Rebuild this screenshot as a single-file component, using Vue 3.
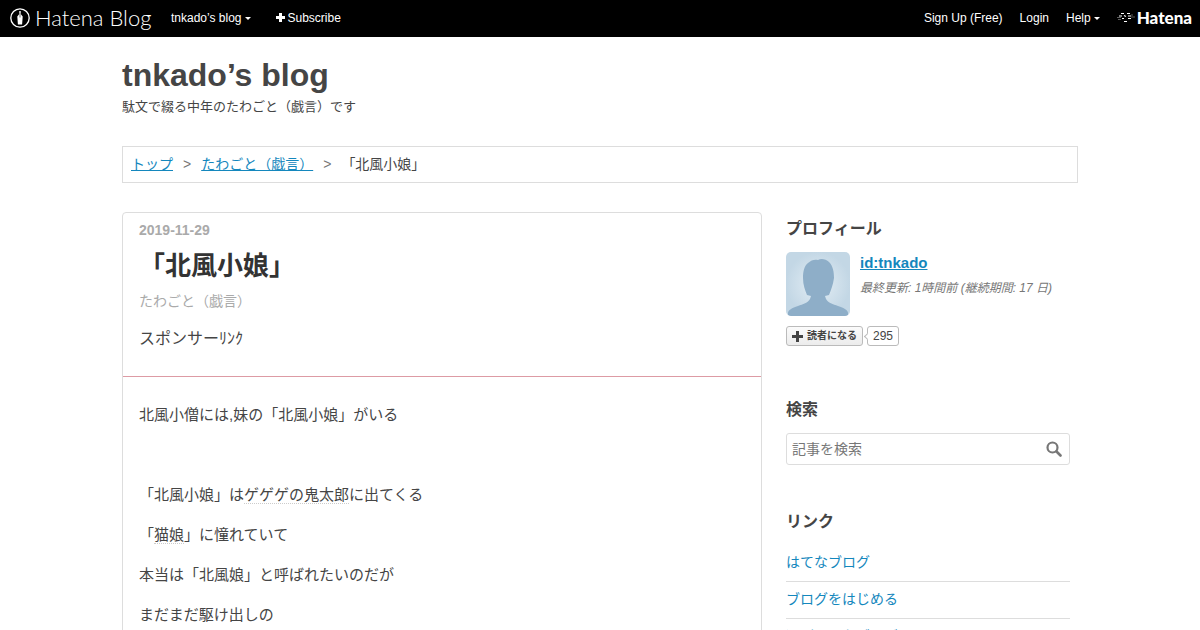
<script setup>
import { ref } from 'vue'

const query = ref('')
const links = ['はてなブログ', 'ブログをはじめる', '週刊はてなブログ']
</script>

<template>
  <header class="globalheader">
    <a href="#" class="brand" aria-label="Hatena Blog">
      <svg class="brand-mark" viewBox="0 0 20 20" aria-hidden="true">
        <circle cx="10" cy="10" r="9.2" fill="none" stroke="#fff" stroke-width="1.3" />
        <path d="M9.300 3h1.400v3l2 2.500-.6 8H7.900l-.6-8 2-2.500z" fill="#fff" />
        <path d="M10 5.500v4" stroke="#000" stroke-width=".6" />
      </svg>
      <span class="brand-name">Hatena Blog</span>
    </a>
    <a href="#" class="nav blog-menu">tnkado’s blog<i class="caret"></i></a>
    <a href="#" class="nav subscribe">
      <svg class="plus" viewBox="0 0 9 9" aria-hidden="true"><path d="M3 0h3v3h3v3H6v3H3V6H0V3h3z" fill="#fff" /></svg>Subscribe
    </a>
    <nav class="right">
      <a href="#" class="nav">Sign Up (Free)</a>
      <a href="#" class="nav">Login</a>
      <a href="#" class="nav">Help<i class="caret"></i></a>
      <a href="#" class="hatena" aria-label="Hatena">
        <svg class="hatena-mark" viewBox="0 0 18 12" aria-hidden="true">
          <g stroke="#fff" fill="none">
            <path d="M4 1.500h3M10 1.500h3M2 4h3M7 3.500l2 1M11 4h3M5 6.500h2M11 6.500h3M7 9.500h3" stroke-width="1.200" />
            <path d="M0 5.500h4M14 5h4M1 7.500h3M14 3h2" stroke-width=".6" opacity=".6" />
          </g>
        </svg>
        <span>Hatena</span>
      </a>
    </nav>
  </header>

  <div class="container">
    <div class="blog-title">
      <h1>tnkado’s blog</h1>
      <p>駄文で綴る中年のたわごと（戯言）です</p>
    </div>

    <nav class="breadcrumb">
      <a href="#">トップ</a><span class="gt">&gt;</span><a href="#">たわごと（戯言）</a><span class="gt">&gt;</span><span>「北風小娘」</span>
    </nav>

    <div class="columns">
      <main class="entry">
        <div class="entry-head">
          <time datetime="2019-11-29">2019-11-29</time>
          <h2>「北風小娘」</h2>
          <a href="#" class="category">たわごと（戯言）</a>
          <p class="sponsor">スポンサーﾘﾝｸ</p>
        </div>
        <div class="entry-body">
          <p>北風小僧には,妹の「北風小娘」がいる</p>
          <p>&nbsp;</p>
          <p>「北風小娘」は<a href="#" class="keyword">ゲゲゲの鬼太郎</a>に出てくる</p>
          <p>「<a href="#" class="keyword">猫娘</a>」に憧れていて</p>
          <p>本当は「北風娘」と呼ばれたいのだが</p>
          <p>まだまだ駆け出しの</p>
        </div>
      </main>

      <aside class="sidebar">
        <section class="profile">
          <h3>プロフィール</h3>
          <div class="profile-row">
            <svg class="avatar" viewBox="0 0 64 64" role="img" aria-label="tnkado">
              <defs>
                <radialGradient id="avatar-bg">
                  <stop offset="0" stop-color="#e4eef5" />
                  <stop offset="1" stop-color="#c3d7e5" />
                </radialGradient>
              </defs>
              <rect width="64" height="64" fill="url(#avatar-bg)" />
              <path d="M32 8c3-2 8-1 11 2 4 4 5 10 5 16-1 7-3 12-5 17l-4 1 1 3c2 4 7 5 12 7 6 2 10 4 10 7v3H2v-3c0-3 4-5 10-7 5-2 10-3 12-7l1-3-4-1c-2-5-4-10-4-17 0-6 1-12 5-15 3-3 7-4 10-3z" fill="#8eaec8" />
            </svg>
            <div class="profile-text">
              <a href="#" class="user-id">id:tnkado</a>
              <p>最終更新: 1時間前 (継続期間: 17 日)</p>
            </div>
          </div>
          <div class="reader">
            <button type="button">
              <svg viewBox="0 0 11 11" aria-hidden="true"><path d="M4 0h3v4h4v3H7v4H4V7H0V4h4z" fill="#444" /></svg>読者になる
            </button>
            <a href="#" class="count">295</a>
          </div>
        </section>

        <section class="search">
          <h3><label for="search-box">検索</label></h3>
          <form class="search-form" @submit.prevent>
            <input id="search-box" v-model="query" type="text" placeholder="記事を検索" />
            <button type="submit" aria-label="検索">
              <svg viewBox="0 0 16 16" aria-hidden="true">
                <circle cx="6.500" cy="6.500" r="5" fill="none" stroke="#777" stroke-width="2.200" />
                <path d="M10.500 10.500l4 4" stroke="#777" stroke-width="2.600" stroke-linecap="round" />
              </svg>
            </button>
          </form>
        </section>

        <section>
          <h3>リンク</h3>
          <ul class="links">
            <li v-for="link in links" :key="link"><a href="#">{{ link }}</a></li>
          </ul>
        </section>
      </aside>
    </div>
  </div>
</template>

<style>
body {
  margin: 0;
  background: #fff;
  color: #454545;
  font-family: "Liberation Sans", "Noto Sans CJK JP", sans-serif;
}
</style>

<style scoped>
h1, h2, h3, p, ul { margin: 0; padding: 0; }
a { color: #1487bd; }

.globalheader {
  display: flex;
  align-items: center;
  height: 35px;
  padding: 0 8px 2px 10px;
  background: #000;
}
.globalheader a { color: #fff; text-decoration: none; white-space: nowrap; }
.brand { display: flex; align-items: center; gap: 5px; width: 143px; }
.brand-mark { width: 20px; height: 20px; flex: none; }
.brand-name { font: 300 22px/34px Lato, sans-serif; }
.nav { font-size: 12px; line-height: 34px; }
.blog-menu { margin-left: 18px; }
.subscribe { margin-left: 25px; }
.plus { width: 9px; height: 9px; margin-right: 3px; }
.caret {
  display: inline-block;
  margin-left: 3px;
  vertical-align: 2px;
  border: 3px solid transparent;
  border-top-color: #fff;
  border-bottom: 0;
}
.right { display: flex; align-items: center; gap: 17px; margin-left: auto; }
.hatena { display: flex; align-items: center; gap: 2px; font: 900 17px/34px Lato, sans-serif; }
.hatena-mark { width: 18px; height: 12px; }

.container { max-width: 956px; margin: 0 auto; }
.blog-title { padding-top: 18px; }
h1 { font-size: 32px; line-height: 40px; }
.blog-title p { font-size: 13px; line-height: 24px; }

.breadcrumb {
  display: flex;
  margin-top: 27px;
  padding: 0 8px;
  border: 1px solid #ddd;
  font-size: 14px;
  line-height: 35px;
}
.gt { margin: 0 10px; color: #777; }

.columns { display: flex; gap: 24px; margin-top: 29px; }
.entry {
  flex: 1 1 640px;
  min-width: 0;
  border: 1px solid #ddd;
  border-radius: 4px;
}
.entry-head { padding: 7px 16px 24px; border-bottom: 1px solid #dd9ba4; }
time { display: block; color: #aaa; font-size: 14px; font-weight: bold; line-height: 20px; }
h2 { margin-top: 8px; color: #333; font-size: 26px; line-height: 36px; }
.category {
  display: block;
  margin-top: 7px;
  color: #aaa;
  font-size: 14px;
  line-height: 20px;
  text-decoration: none;
}
.sponsor { margin-top: 14px; font-size: 16px; line-height: 27px; }
.entry-body { padding: 25px 16px; font-size: 15px; line-height: 26px; }
.entry-body p { margin-bottom: 14px; }
.keyword { color: inherit; text-decoration: none; border-bottom: 1px dotted #ccc; }

.sidebar { flex: 0 0 284px; margin-right: 8px; }
h3 { font-size: 16px; line-height: 34px; }
.profile-row { display: flex; gap: 10px; margin-top: 6px; }
.avatar { width: 64px; height: 64px; border-radius: 5px; }
.user-id { font-size: 15px; font-weight: bold; line-height: 22px; }
.profile-text p { color: #777; font-size: 12px; font-style: italic; line-height: 28px; white-space: nowrap; }
.reader { display: flex; gap: 4px; margin-top: 10px; }
.reader button {
  display: flex;
  align-items: center;
  gap: 4px;
  height: 20px;
  padding: 0 5px;
  border: 1px solid #bbb;
  border-radius: 3px;
  background: linear-gradient(#fbfbfb, #ececec);
  color: #444;
  font: bold 10px/18px "Liberation Sans", "Noto Sans CJK JP", sans-serif;
}
.reader svg { width: 11px; height: 11px; }
.count {
  position: relative;
  padding: 0 5px;
  border: 1px solid #bbb;
  border-radius: 3px;
  color: #454545;
  font-size: 12px;
  line-height: 18px;
  text-decoration: none;
}
.count::before {
  content: "";
  position: absolute;
  left: -3px;
  top: 7px;
  width: 4px;
  height: 4px;
  border: solid #bbb;
  border-width: 0 0 1px 1px;
  background: #fff;
  transform: rotate(45deg);
}

.search { margin: 47px 0 40px; }
.search-form {
  display: flex;
  align-items: center;
  height: 30px;
  margin-top: 6px;
  border: 1px solid #ddd;
  border-radius: 3px;
}
.search-form input {
  flex: 1;
  min-width: 0;
  padding: 0 5px;
  border: 0;
  outline: 0;
  background: transparent;
  color: #454545;
  font: 14px/28px "Liberation Sans", "Noto Sans CJK JP", sans-serif;
}
.search-form input::placeholder { color: #777; }
.search-form button { display: flex; padding: 0 7px; border: 0; background: none; }
.search-form svg { width: 16px; height: 16px; }

.links { margin-top: 6px; list-style: none; }
.links li { padding-bottom: 2px; border-bottom: 1px solid #ddd; font-size: 14px; line-height: 34px; }
.links a { text-decoration: none; }
</style>
